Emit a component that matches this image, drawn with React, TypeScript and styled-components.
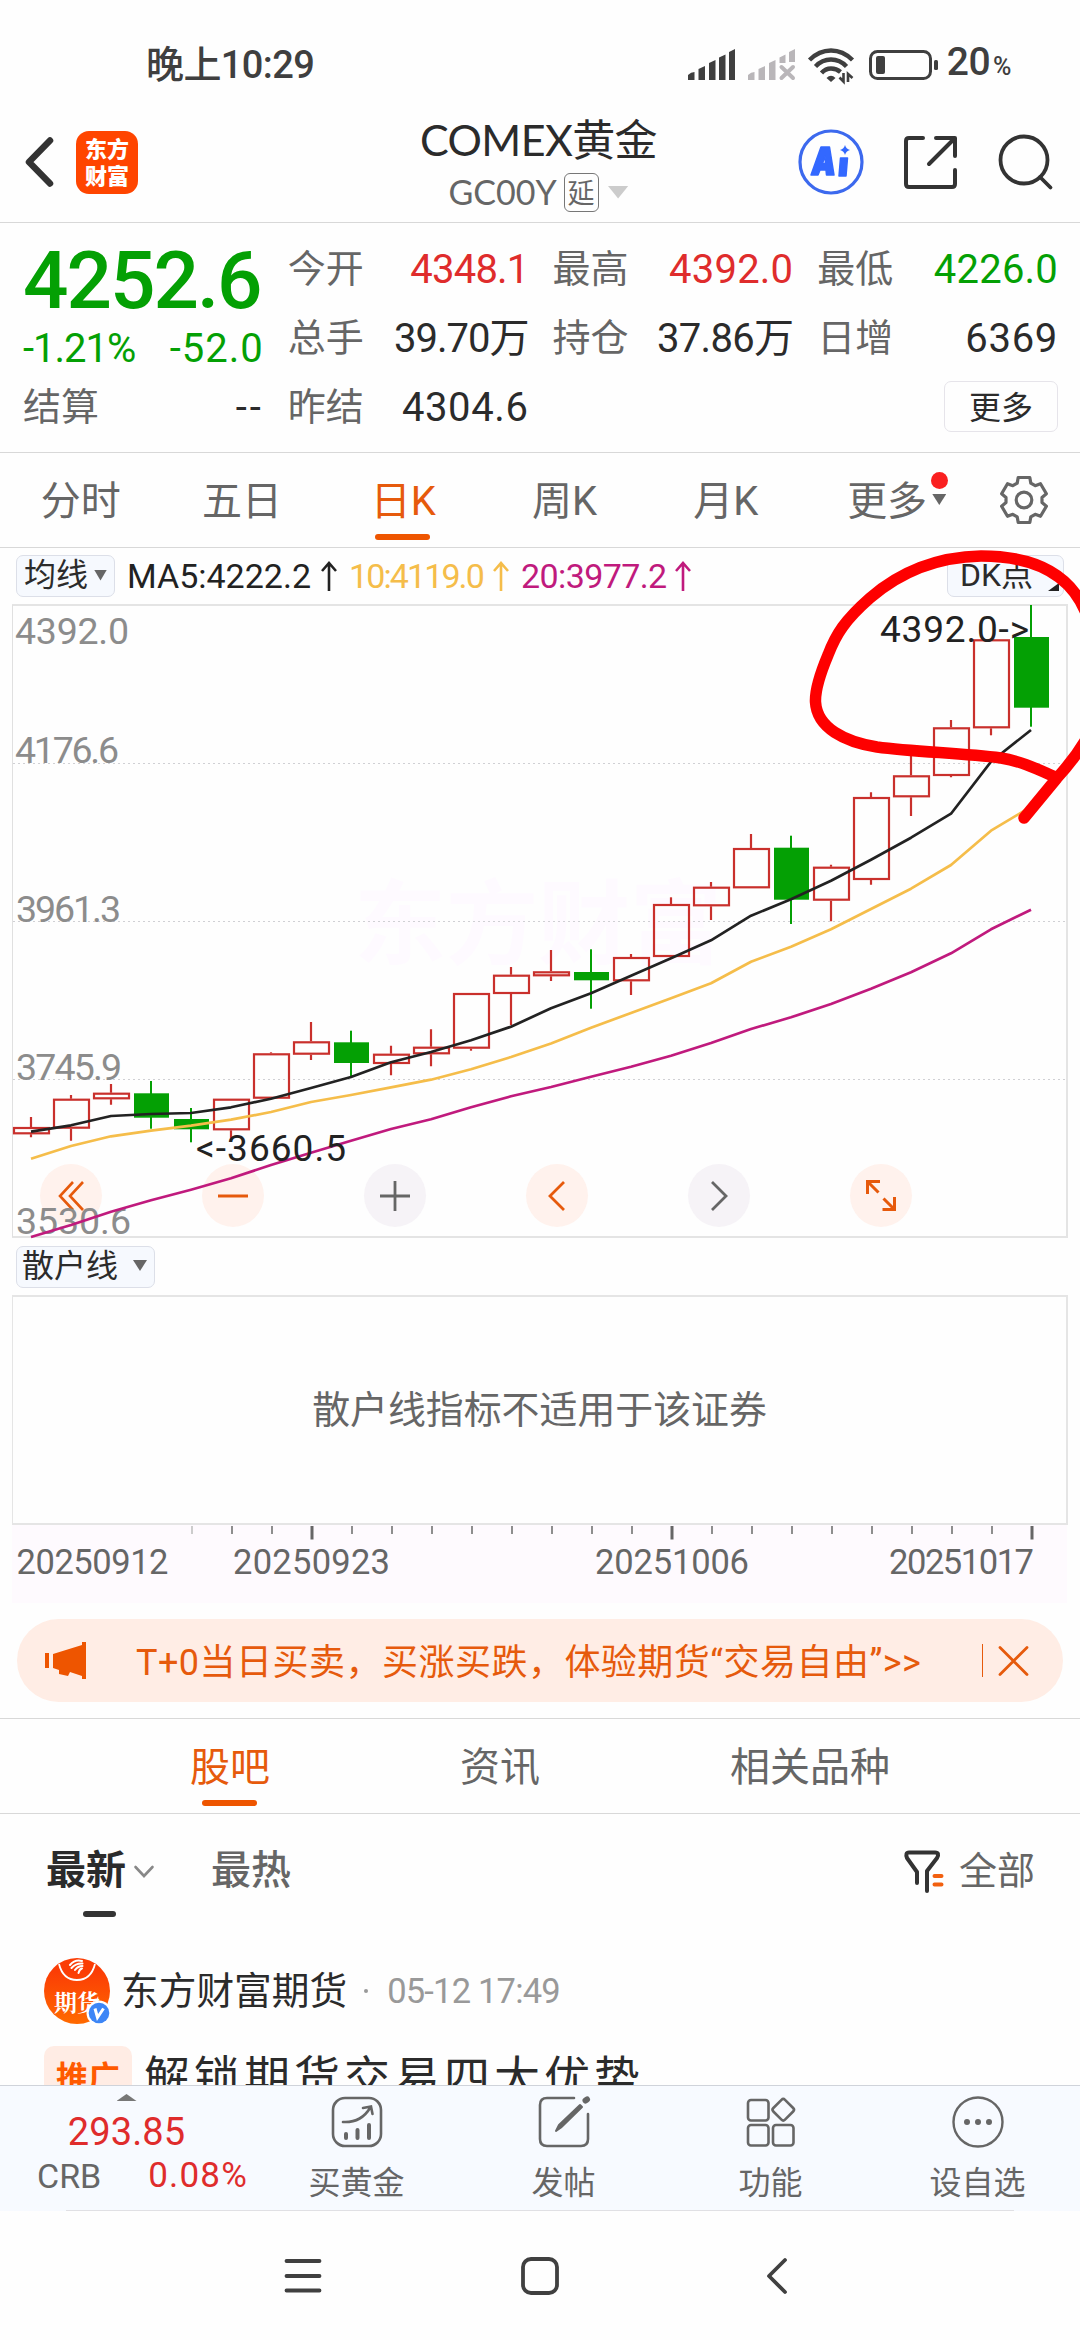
import React from "react";
import styled, { createGlobalStyle, css } from "styled-components";

const GlobalStyle = createGlobalStyle`
  * { box-sizing: border-box; }
  html, body { margin: 0; padding: 0; background: #fff; }
  body {
    width: 1080px;
    height: 2340px;
    overflow: hidden;
    font-family: Roboto, "Noto Sans CJK SC", sans-serif;
    color: #2b2b2b;
  }
  svg { display: block; flex: none; overflow: visible; }
`;

const color = {
  ink: "#2b2b2b",
  mute: "#666",
  red: "#df2c2c",
  green: "#04a004",
  orange: "#e65a0c",
  line: "#d8d8d8",
  ma10: "#f5bd4a",
  ma20: "#c01a7d",
};

const Screen = styled.div`
  position: relative;
  width: 1080px;
  height: 2340px;
  display: flex;
  flex-direction: column;
  background: #fefefe;
  overflow: hidden;
`;

/* ---------- status bar ---------- */
const StatusBar = styled.div`
  height: 112px;
  padding: 17px 69px 0 146px;
  display: flex;
  align-items: center;
  color: #3f3f3f;
  font-weight: 500;
`;
const Clock = styled.div`
  font-size: 38px;
  line-height: 48px;
  letter-spacing: -0.6px;
  margin-right: auto;
`;
const Percent = styled.div`
  display: flex;
  align-items: baseline;
  font-size: 39px;
  line-height: 48px;
  letter-spacing: -0.5px;
  small { font-size: 25px; margin-left: 3px; }
`;
const StatusIcons = styled.div`
  display: flex;
  align-items: center;
  gap: 13px;
  margin-right: 9px;
`;

/* ---------- app header ---------- */
const Header = styled.header`
  height: 111px;
  padding: 0 28px 0 25px;
  display: grid;
  grid-template-columns: 230px 1fr 230px;
  align-items: center;
  border-bottom: 1px solid ${color.line};
`;
const HeaderSide = styled.div<{ $end?: boolean }>`
  display: flex;
  align-items: center;
  gap: ${(p) => (p.$end ? "0" : "22px")};
  justify-content: ${(p) => (p.$end ? "flex-end" : "flex-start")};
  padding-bottom: 12px;
`;
const Logo = styled.div`
  width: 62px;
  height: 63px;
  padding-top: 3px;
  border-radius: 13px;
  background: #ff4500;
  color: #fff;
  font: 900 22px/27px "Noto Sans CJK SC", sans-serif;
  text-align: center;
  padding-bottom: 6px;
`;
const Titles = styled.div`
  display: flex;
  flex-direction: column;
  align-items: center;
  height: 112px;
`;
const Title = styled.h1`
  margin: 0;
  font: 400 43px/56px Lato, "Noto Sans CJK SC", sans-serif;
  letter-spacing: -0.6px;
`;
const SubTitle = styled.div`
  display: flex;
  align-items: center;
  height: 48px;
  color: ${color.mute};
  font: 400 34px/46px Lato, sans-serif;
`;
const DelayTag = styled.span`
  width: 35px;
  height: 39px;
  margin: 0 9px 0 7px;
  border: 1.5px solid #777;
  border-radius: 6px;
  font: 400 27px/36px "Noto Sans CJK SC", sans-serif;
  text-align: center;
`;
const Triangle = styled.i<{ $w: number; $h: number; $c: string; $up?: boolean }>`
  width: ${(p) => p.$w}px;
  height: ${(p) => p.$h}px;
  flex: none;
  background: ${(p) => p.$c};
  clip-path: ${(p) => (p.$up ? "polygon(0 100%, 50% 0, 100% 100%)" : "polygon(0 0, 100% 0, 50% 100%)")};
`;

/* ---------- quote ---------- */
const Quote = styled.section`
  height: 230px;
  padding: 11px 22px 0 23px;
  display: grid;
  grid-template-columns: repeat(4, 1fr);
  column-gap: 24px;
  align-items: start;
  border-bottom: 1px solid ${color.line};
`;
const QuoteColumn = styled.div`
  display: grid;
  grid-auto-rows: 69px;
`;
const QuoteCell = styled.div`
  display: flex;
  align-items: center;
  justify-content: space-between;
  white-space: nowrap;
`;
const Label = styled.span`
  font-size: 38px;
  line-height: 50px;
  color: ${color.mute};
`;
const Value = styled.span<{ $c?: string; $ls?: number }>`
  font-size: 40px;
  line-height: 50px;
  padding-top: 2px;
  letter-spacing: ${(p) => p.$ls ?? 0}px;
  color: ${(p) => p.$c ?? color.ink};
`;
const PriceColumn = styled.div`
  display: grid;
  grid-template-rows: 90px 48px 69px;
`;
const Price = styled.div`
  padding-top: 2px;
  font-size: 80px;
  font-weight: 500;
  line-height: 90px;
  letter-spacing: -2px;
  color: ${color.green};
`;
const MoreButton = styled.button`
  width: 114px;
  height: 51px;
  margin-left: auto;
  padding: 0 0 4px;
  border: 1.5px solid #e6e4ea;
  border-radius: 7px;
  background: transparent;
  color: ${color.ink};
  font: 400 32px/44px "Noto Sans CJK SC", sans-serif;
`;

/* ---------- tabs ---------- */
const PeriodTabs = styled.nav`
  height: 95px;
  display: flex;
  border-bottom: 1px solid ${color.line};
`;
const underline = css`
  &::after {
    content: "";
    position: absolute;
    left: 50%;
    bottom: 7px;
    width: 55px;
    height: 6px;
    margin-left: -28px;
    border-radius: 3px;
    background: #ee5500;
  }
`;
const Tab = styled.div<{ $active?: boolean; $w?: number }>`
  position: relative;
  width: ${(p) => (p.$w ? `${p.$w}px` : "auto")};
  display: flex;
  align-items: center;
  justify-content: center;
  padding-bottom: 4px;
  font-size: 40px;
  color: ${(p) => (p.$active ? color.orange : color.mute)};
  ${(p) => p.$active && underline}
`;
const TabCaret = styled.span`
  position: absolute;
  right: 20px;
  top: 19px;
  display: flex;
  flex-direction: column;
  align-items: center;
  gap: 5px;
`;
const Dot = styled.i`
  width: 17px;
  height: 17px;
  border-radius: 50%;
  background: #fa2020;
`;
const GearCell = styled.div`
  flex: 1;
  display: flex;
  align-items: center;
  justify-content: center;
`;

/* ---------- chart ---------- */
const IndicatorRow = styled.div<{ $h: number }>`
  height: ${(p) => p.$h}px;
  padding: 0 16px;
  display: flex;
  align-items: center;
`;
const Picker = styled.div<{ $w: number; $inset?: number }>`
  width: ${(p) => p.$w}px;
  height: 42px;
  padding: 0 7px 2px ${(p) => p.$inset ?? 7}px;
  display: flex;
  align-items: center;
  justify-content: space-between;
  border: 1px solid #dcdfe8;
  border-radius: 7px;
  background: #f6f9fe;
  font-size: 32px;
  line-height: 38px;
  white-space: nowrap;
`;
const Average = styled.div<{ $c: string; $ls: number; $w: number }>`
  width: ${(p) => p.$w}px;
  display: flex;
  align-items: center;
  justify-content: space-between;
  color: ${(p) => p.$c};
  font-size: 34px;
  line-height: 42px;
  letter-spacing: ${(p) => p.$ls}px;
  white-space: nowrap;
`;
const Averages = styled.div`
  display: flex;
  gap: 12px;
  margin: 0 auto 0 12px;
`;
const ChartBox = styled.div`
  position: relative;
  height: 634px;
`;
const ChartTools = styled.div`
  position: absolute;
  left: 40px;
  bottom: 11px;
  display: flex;
  gap: 100px;
`;
const Tool = styled.button<{ $grey?: boolean }>`
  width: 62px;
  height: 63px;
  padding: 0;
  border: 0;
  border-radius: 50%;
  display: flex;
  align-items: center;
  justify-content: center;
  background: ${(p) => (p.$grey ? "#f6f3f7" : "#fff2ed")};
  color: ${(p) => (p.$grey ? "#666" : color.orange)};
`;
const ChartSvg = styled.svg`
  position: relative;
`;
const EmptyPanel = styled.div`
  height: 230px;
  margin: 0 12px;
  padding-bottom: 8px;
  border: 2px solid #e5e5e5;
  border-left-width: 1px;
  display: flex;
  align-items: center;
  justify-content: center;
  font-size: 37.9px;
  color: ${color.mute};
`;
const MarkOverlay = styled.svg`
  position: absolute;
  left: 0;
  top: 0;
  pointer-events: none;
`;

/* ---------- banner ---------- */
const Banner = styled.div`
  height: 83px;
  margin: 16px 17px;
  padding: 0 34px 0 28px;
  display: flex;
  align-items: center;
  border-radius: 42px;
  background: #ffede5;
  color: ${color.orange};
  font-size: 36px;
  white-space: nowrap;
`;
const BannerText = styled.span`
  margin: 0 auto 0 50px;
  padding-bottom: 3px;
  letter-spacing: 0.48px;
`;
const BannerRule = styled.i`
  width: 1.5px;
  height: 33px;
  margin-right: 15px;
  background: ${color.orange};
`;

/* ---------- feed ---------- */
const FeedTabs = styled.nav`
  height: 96px;
  display: flex;
  justify-content: space-evenly;
  border-top: 1px solid ${color.line};
  border-bottom: 1px solid ${color.line};
`;
const SortRow = styled.div`
  height: 144px;
  padding: 33px 45px 0 46px;
  display: flex;
  align-items: flex-start;
  font-size: 40px;
  line-height: 48px;
`;
const Sort = styled.div<{ $active?: boolean }>`
  position: relative;
  display: flex;
  align-items: center;
  margin-right: 57px;
  gap: 8px;
  font-weight: ${(p) => (p.$active ? 700 : 500)};
  color: ${(p) => (p.$active ? color.ink : color.mute)};
  &::after {
    content: "";
    display: ${(p) => (p.$active ? "block" : "none")};
    position: absolute;
    left: 37px;
    top: 64px;
    width: 33px;
    height: 6px;
    border-radius: 3px;
    background: #333;
  }
`;
const Filter = styled.div`
  margin-left: auto;
  display: flex;
  align-items: center;
  gap: 15px;
  font-size: 38px;
  color: ${color.mute};
`;
const Post = styled.article`
  height: 127px;
  padding: 0 44px;
  overflow: hidden;
`;
const Author = styled.div`
  display: flex;
  align-items: center;
  height: 66px;
  font-size: 37.7px;
  line-height: 50px;
  white-space: nowrap;
`;
const Avatar = styled.div`
  position: relative;
  width: 66px;
  height: 66px;
  margin-right: 11px;
  border-radius: 50%;
  background: linear-gradient(#fb3d05 20%, #ff6a00);
  color: #fff;
  font: 700 23px/26px "Noto Serif CJK SC", "Noto Sans CJK SC", serif;
  padding: 31px 0 0 10px;
`;
const AvatarMark = styled.svg`
  position: absolute;
  left: 0;
  top: 0;
`;
const When = styled.span`
  color: #999;
  font-size: 34.5px;
  letter-spacing: -0.8px;
`;
const Separator = styled.i`
  width: 4px;
  height: 4px;
  margin: 0 19px 0 17px;
  border-radius: 50%;
  background: #999;
`;
const PostTitle = styled.div`
  display: flex;
  align-items: flex-start;
  margin-top: 22px;
  white-space: nowrap;
  font-size: 46px;
  font-weight: 400;
  line-height: 64px;
  letter-spacing: 4px;
`;
const Promo = styled.span`
  width: 88px;
  height: 66px;
  margin-right: 12px;
  border-radius: 10px;
  background: #ffece4;
  color: #ff5a00;
  font-size: 32px;
  font-weight: 700;
  line-height: 65px;
  letter-spacing: 0;
  text-align: center;
`;

/* ---------- bottom bars ---------- */
const BottomBar = styled.div`
  height: 126px;
  display: grid;
  grid-template-columns: 253px repeat(4, 207px);
  border-top: 1px solid #cfd3da;
  background: #f7faff;
`;
const IndexCell = styled.div`
  display: flex;
  flex-direction: column;
  align-items: center;
  padding-top: 8px;
`;
const IndexPrice = styled.div`
  margin-top: 9px;
  font-size: 38px;
  line-height: 44px;
  color: ${color.red};
  letter-spacing: 0.1px;
`;
const IndexRow = styled.div`
  width: 100%;
  padding: 0 5px 0 37px;
  display: flex;
  justify-content: space-between;
  font-size: 34px;
  line-height: 44px;
  color: ${color.mute};
  em { font-style: normal; font-size: 35px; color: ${color.red}; letter-spacing: 1.2px; }
`;
const Action = styled.div`
  display: flex;
  flex-direction: column;
  align-items: center;
  gap: 13px;
  padding-top: 10px;
  color: ${color.mute};
  font-size: 32px;
  line-height: 44px;
`;
const NavBar = styled.div`
  height: 129px;
  display: flex;
  justify-content: center;
  align-items: center;
  gap: 199px;
  position: relative;
  &::before {
    content: "";
    position: absolute;
    left: 66px;
    right: 66px;
    top: -1px;
    height: 1px;
    background: #e0e0e4;
  }
`;

/* ---------- data ---------- */
type Candle = [up: 0 | 1, high: number, top: number, bottom: number, low: number];
const candles: Candle[] = [
  [1, 1117, 1127, 1134.3, 1137.3],
  [1, 1095, 1098.7, 1128.7, 1140.7],
  [1, 1084, 1092.7, 1099.3, 1104.7],
  [0, 1081, 1093.3, 1117.7, 1128.7],
  [0, 1108, 1119, 1129.3, 1142.3],
  [1, 1098.7, 1098.7, 1130.3, 1139.7],
  [1, 1052.3, 1053.3, 1098.7, 1098.7],
  [1, 1022, 1041.3, 1054.7, 1060],
  [0, 1030.7, 1042.3, 1063, 1077],
  [1, 1045.7, 1053.7, 1064, 1075.3],
  [1, 1029.3, 1046.7, 1054.3, 1066.3],
  [1, 993, 993, 1048.7, 1050.7],
  [1, 967, 974.7, 994, 1025.3],
  [1, 950, 971.3, 976.3, 981],
  [0, 949.3, 972, 980.3, 1008.7],
  [1, 954, 957, 981.3, 995],
  [1, 897.3, 904, 957, 957],
  [1, 882, 886.7, 906.3, 920],
  [1, 834, 848, 888.3, 888.3],
  [0, 835.7, 847.7, 899.7, 924],
  [1, 864.7, 866.7, 900.7, 921.3],
  [1, 792.3, 797, 880, 884.7],
  [1, 755, 775.3, 797.3, 816],
  [1, 720, 727.3, 776, 777.3],
  [1, 639.3, 639.3, 728.3, 735.3],
  [0, 605, 637, 707.7, 726.7],
];
const averages: { stroke: string; ys: number[] }[] = [
  {
    stroke: color.ma20,
    ys: [1237, 1225, 1211.7, 1200.3, 1189.7, 1178.3, 1165, 1152.7, 1140.7, 1129, 1119.3, 1107.3, 1096.3, 1087, 1076.7, 1066.7, 1055.7, 1043, 1029, 1017.3, 1004, 988.7, 972.3, 953.3, 929.3, 909.7],
  },
  {
    stroke: color.ma10,
    ys: [1158.7, 1146, 1136.3, 1130.7, 1125.7, 1119.7, 1112, 1102, 1095, 1087.3, 1079.7, 1069.3, 1057, 1043.5, 1027.7, 1013, 998.3, 983.3, 961.7, 946.7, 929.3, 909, 888.7, 865, 830.7, 806.7],
  },
  {
    stroke: "#222",
    ys: [1131.7, 1125.3, 1116, 1114, 1113, 1107.3, 1098.7, 1088, 1077, 1062.3, 1052, 1040.3, 1026.7, 1008.3, 993.3, 975.7, 958.3, 940.3, 915.7, 899.3, 880.7, 859.7, 837.7, 813.7, 761.7, 730],
  },
];
const cx = (i: number) => 31 + i * 40;
const levels = [
  { t: "4392.0", x: 15, y: 644, w: 114 },
  { t: "4176.6", x: 15, y: 763, w: 104 },
  { t: "3961.3", x: 16, y: 922, w: 105 },
  { t: "3745.9", x: 16, y: 1080, w: 106 },
  { t: "3530.6", x: 16, y: 1234, w: 115 },
];
const dates = [
  { t: "20250912", x: 16.5, w: 152 },
  { t: "20250923", x: 233, w: 157 },
  { t: "20251006", x: 595, w: 154 },
  { t: "20251017", x: 889, w: 145 },
];

const KLine = () => (
  <ChartSvg width={1080} height={634} viewBox="0 604 1080 634">
    {[763.5, 921.5, 1079.5].map((y) => (
      <line key={y} x1={13} x2={1066} y1={y} y2={y} stroke="#d0d0d4" strokeWidth={1} strokeDasharray="2 3" />
    ))}
    <path d="M12 605H1067V1237H12" fill="none" stroke="#e4e4e4" strokeWidth={2} />
    <path d="M12.5 605V1237" stroke="#e0e0e0" strokeWidth={1} />
    {levels.map((l) => (
      <text key={l.t} x={l.x} y={l.y} textLength={l.w} fontSize={37.5} fill="#8c8c8c">{l.t}</text>
    ))}
    {candles.map(([up, high, top, bottom, low], i) =>
      up ? (
        <g key={i} stroke="#c9302c" strokeWidth={2.2} fill="none">
          <path d={`M${cx(i)} ${high}V${top}M${cx(i)} ${bottom}V${low}`} />
          <rect x={cx(i) - 17} y={top + 1} width={35} height={bottom - top - 2} />
        </g>
      ) : (
        <g key={i} fill="#04a004">
          <rect x={cx(i) - 1} y={high} width={2} height={low - high} />
          <rect x={cx(i) - 17} y={top} width={35} height={bottom - top} />
        </g>
      )
    )}
    {averages.map((a) => (
      <polyline
        key={a.stroke}
        points={a.ys.map((y, i) => `${cx(i)},${y}`).join(" ")}
        fill="none"
        stroke={a.stroke}
        strokeWidth={2.7}
        strokeLinejoin="round"
      />
    ))}
    <text x={196} y={1160.5} textLength={150} fontSize={37} fill="#222">{"<-3660.5"}</text>
    <text x={880} y={642} textLength={149} fontSize={37} fill="#222">{"4392.0->"}</text>
  </ChartSvg>
);

const WatermarkText = styled.div`
  position: absolute;
  left: 354px;
  top: 248px;
  font: 700 92px/130px "Noto Sans CJK SC", sans-serif;
  color: #fefaff;
`;

const TimeAxis = () => (
  <svg width={1080} height={78} viewBox="0 1525 1080 78">
    <rect x={12} y={1525} width={1055} height={78} fill="#fefafe" />
    {Array.from({ length: 22 }, (_, i) => {
      const x = 192 + i * 40;
      const major = x === 312 || x === 672 || x === 1032;
      return (
        <rect
          key={x}
          x={x - (major ? 1.5 : 1)}
          y={1526}
          width={major ? 3 : 2}
          height={major ? 13.5 : 8}
          fill={i === 0 ? "#ccc" : major ? "#666" : "#8e8e8e"}
        />
      );
    })}
    {dates.map((d) => (
      <text key={d.t} x={d.x} y={1574} textLength={d.w} fontSize={34.5} fill="#666">{d.t}</text>
    ))}
  </svg>
);

const UpArrow = () => (
  <svg width={16} height={30} viewBox="0 0 16 30" fill="none" stroke="currentColor" strokeWidth={2.6}>
    <path d="M8 30V2M1 10L8 2L15 10" />
  </svg>
);

const gearPoints = Array.from({ length: 6 }, (_, k) => {
  const a = -90 + k * 60;
  return ([[-22, 18.2], [-14.5, 23.2], [14.5, 23.2], [22, 18.2]] as const)
    .map(([d, r]) => {
      const t = ((a + d) * Math.PI) / 180;
      return `${(r * Math.cos(t)).toFixed(1)},${(r * Math.sin(t)).toFixed(1)}`;
    })
    .join(" ");
}).join(" ");

const Signal = ({ off }: { off?: boolean }) => (
  <svg width={47} height={31} viewBox="0 0 47 31" fill={off ? "#b9b6b9" : "#3f3f3f"}>
    <path d="M0 31V26Q3 23 6.5 23V31Z" />
    <path d="M10.5 31V20L17 17V31Z" />
    <path d="M21 31V14L27.5 11V31Z" />
    {off ? (
      <>
        <path d="M31.5 14V8.5L37.5 5.5V14ZM41 13V3L47 0V13Z" />
        <path d="M33.5 18L45 29M45 18L33.5 29" stroke="#b9b6b9" strokeWidth={4} strokeLinecap="round" />
      </>
    ) : (
      <path d="M31 31V8.5L37.5 5.5V31ZM41 31V3L47 0V31Z" />
    )}
  </svg>
);

const BatteryIcon = styled.svg`
  margin-left: 2px;
`;

const StatusGlyphs = () => (
  <StatusIcons>
    <Signal />
    <Signal off />
    <svg width={46} height={34} viewBox="0 0 46 34" fill="none" stroke="#3f3f3f" strokeWidth={4.4}>
      <path d="M1.5 12Q11 2.5 23 2.5T44.5 12M7.5 18.5Q14 11.5 23 11.5T38.5 18.5M13.5 25Q17.5 20.5 23 20.5T32.5 24" />
      <path d="M18.5 30Q23 25.5 27.5 30L23 34Z" fill="#3f3f3f" stroke="none" />
      <path d="M35.5 25V33.5L31.5 29.5M40 34V26L44.5 30" strokeWidth={2.6} />
    </svg>
    <BatteryIcon width={69} height={30} viewBox="0 0 69 30">
      <rect x={1.5} y={1.5} width={60} height={27} rx={7} fill="none" stroke="#3f3f3f" strokeWidth={3} />
      <rect x={7} y={6} width={9} height={18} rx={2} fill="#3f3f3f" />
      <rect x={65} y={10} width={4} height={10} rx={1.5} fill="#3f3f3f" />
    </BatteryIcon>
  </StatusIcons>
);

const ShareIcon = styled.svg`
  margin: 0 41px 0 40px;
`;

const quoteColumns: { label: string; value: string; c?: string; ls?: number }[][] = [
  [
    { label: "今开", value: "4348.1", c: color.red, ls: -0.8 },
    { label: "总手", value: "39.70万", ls: -1 },
    { label: "昨结", value: "4304.6", ls: 0.6 },
  ],
  [
    { label: "最高", value: "4392.0", c: color.red, ls: 0.2 },
    { label: "持仓", value: "37.86万", ls: -0.7 },
  ],
  [
    { label: "最低", value: "4226.0", c: color.green, ls: 0.2 },
    { label: "日增", value: "6369", ls: 0.7 },
  ],
];

export default function App() {
  return (
    <Screen>
      <GlobalStyle />
      <StatusBar>
        <Clock>晚上10:29</Clock>
        <StatusGlyphs />
        <Percent>20<small>%</small></Percent>
      </StatusBar>

      <Header>
        <HeaderSide>
          <svg width={29} height={50} viewBox="0 0 29 50" fill="none" stroke="#333" strokeWidth={6.5} strokeLinecap="round">
            <path d="M25 3.5L4 25L25 46.5" strokeLinejoin="round" />
          </svg>
          <Logo>东方<br />财富</Logo>
        </HeaderSide>
        <Titles>
          <Title>COMEX黄金</Title>
          <SubTitle>
            GC00Y
            <DelayTag>延</DelayTag>
            <Triangle $w={21} $h={13} $c="#ccc" />
          </SubTitle>
        </Titles>
        <HeaderSide $end>
          <svg width={66} height={66} viewBox="0 0 66 66" fill="none">
            <circle cx={33} cy={33} r={31} stroke="#3c69ee" strokeWidth={3.2} />
            <path d="M13 46L23 18H31.5L36 46H28.5L28 41H22L20 46ZM24.5 34.5H27.5L27 27Z" fill="#3368ff" stroke="#3368ff" strokeWidth={1.5} strokeLinejoin="round" fillRule="evenodd" />
            <path d="M42.5 29H49.5L48 47H41Z" fill="#3368ff" stroke="#3368ff" strokeWidth={1.5} strokeLinejoin="round" />
            <path d="M47 16Q48 20 52 21Q48 22 47 26Q46 22 42 21Q46 20 47 16Z" fill="#3368ff" />
          </svg>
          <ShareIcon width={53} height={53} viewBox="0 0 53 53" fill="none" stroke="#333" strokeWidth={4} strokeLinecap="round" strokeLinejoin="round">
            <path d="M19 2H5Q2 2 2 5V48Q2 51 5 51H48Q51 51 51 48V34M32 2H51V20M50 3L25 28" />
          </ShareIcon>
          <svg width={54} height={54} viewBox="0 0 54 54" fill="none" stroke="#333" strokeWidth={3.8} strokeLinecap="round">
            <circle cx={26} cy={25} r={23.5} />
            <path d="M42 42L52.5 52.5" />
          </svg>
        </HeaderSide>
      </Header>

      <Quote>
        <PriceColumn>
          <Price>4252.6</Price>
          <QuoteCell>
            <Value $c={color.green} $ls={-1}>-1.21%</Value>
            <Value $c={color.green} $ls={1}>-52.0</Value>
          </QuoteCell>
          <QuoteCell>
            <Label>结算</Label>
            <Value $ls={3}>--</Value>
          </QuoteCell>
        </PriceColumn>
        {quoteColumns.map((col, c) => (
          <QuoteColumn key={c}>
            {col.map((q) => (
              <QuoteCell key={q.label}>
                <Label>{q.label}</Label>
                <Value $c={q.c} $ls={q.ls}>{q.value}</Value>
              </QuoteCell>
            ))}
            {c === 2 && (
              <QuoteCell>
                <MoreButton>更多</MoreButton>
              </QuoteCell>
            )}
          </QuoteColumn>
        ))}
      </Quote>

      <PeriodTabs>
        {["分时", "五日", "日K", "周K", "月K", "更多"].map((t) => (
          <Tab key={t} $w={161.3} $active={t === "日K"}>
            {t}
            {t === "更多" && (
              <TabCaret>
                <Dot />
                <Triangle $w={14} $h={11} $c="#666" />
              </TabCaret>
            )}
          </Tab>
        ))}
        <GearCell>
          <svg width={48} height={48} viewBox="-24 -24 48 48" fill="none" stroke="#666" strokeWidth={3.2} strokeLinejoin="round">
            <polygon points={gearPoints} />
            <circle r={7.8} />
          </svg>
        </GearCell>
      </PeriodTabs>

      <IndicatorRow $h={56}>
        <Picker $w={99}>
          均线
          <Triangle $w={13} $h={11} $c="#666" />
        </Picker>
        <Averages>
          <Average $c="#222" $ls={0} $w={210}>MA5:4222.2<UpArrow /></Average>
          <Average $c={color.ma10} $ls={-1.9} $w={160}>10:4119.0<UpArrow /></Average>
          <Average $c={color.ma20} $ls={-0.6} $w={170}>20:3977.2<UpArrow /></Average>
        </Averages>
        <Picker $w={117} $inset={12}>DK点</Picker>
      </IndicatorRow>

      <ChartBox>
        <WatermarkText>东方财富</WatermarkText>
        <ChartTools>
          <Tool>
            <svg width={26} height={30} viewBox="0 0 26 30" fill="none" stroke="currentColor" strokeWidth={2.6}>
              <path d="M15 1L2 15L15 29M25 1L12 15L25 29" />
            </svg>
          </Tool>
          <Tool>
            <svg width={30} height={30} viewBox="0 0 30 30" stroke="currentColor" strokeWidth={3}>
              <path d="M0 15H30" />
            </svg>
          </Tool>
          <Tool $grey>
            <svg width={30} height={30} viewBox="0 0 30 30" stroke="currentColor" strokeWidth={2.8}>
              <path d="M0 15H30M15 0V30" />
            </svg>
          </Tool>
          <Tool>
            <svg width={18} height={30} viewBox="0 0 18 30" fill="none" stroke="currentColor" strokeWidth={2.8}>
              <path d="M16 1L2 15L16 29" />
            </svg>
          </Tool>
          <Tool $grey>
            <svg width={18} height={30} viewBox="0 0 18 30" fill="none" stroke="currentColor" strokeWidth={2.8}>
              <path d="M2 1L16 15L2 29" />
            </svg>
          </Tool>
          <Tool>
            <svg width={30} height={31} viewBox="0 0 30 31" fill="none" stroke="currentColor" strokeWidth={3}>
              <path d="M1.5 14V1.5H14M2 2L12.5 12.5M28.5 17V29.5H16.5M28 29L17.5 18.5" />
            </svg>
          </Tool>
        </ChartTools>
        <KLine />
      </ChartBox>

      <IndicatorRow $h={57}>
        <Picker $w={139} $inset={5}>
          散户线
          <Triangle $w={14} $h={11} $c="#666" />
        </Picker>
      </IndicatorRow>
      <EmptyPanel>散户线指标不适用于该证券</EmptyPanel>
      <TimeAxis />

      <Banner>
        <svg width={41} height={37} viewBox="0 0 41 37" fill="#ee5500">
          <path d="M0 11H4V26H0ZM8 12L37 3V0H41V37H37V34L25 30L23 34L14 32V28L8 26Z" />
        </svg>
        <BannerText>T+0当日买卖，买涨买跌，体验期货“交易自由”&gt;&gt;</BannerText>
        <BannerRule />
        <svg width={31} height={30} viewBox="0 0 31 30" stroke="currentColor" strokeWidth={2.8} strokeLinecap="round">
          <path d="M2 1.5L29 28.5M29 1.5L2 28.5" />
        </svg>
      </Banner>

      <FeedTabs>
        <Tab $active>股吧</Tab>
        <Tab>资讯</Tab>
        <Tab>相关品种</Tab>
      </FeedTabs>

      <SortRow>
        <Sort $active>
          最新
          <svg width={20} height={13} viewBox="0 0 20 13" fill="none" stroke="#888" strokeWidth={2.6} strokeLinecap="round">
            <path d="M1.5 2L10 11L18.5 2" />
          </svg>
        </Sort>
        <Sort>最热</Sort>
        <Filter>
          <svg width={40} height={43} viewBox="0 0 40 43" fill="none" stroke="#333" strokeWidth={4} strokeLinecap="round" strokeLinejoin="round">
            <path d="M13 33V22L3 8Q1 2.5 5 2.5H31Q36 2.5 33 8L23 21V41" />
            <path d="M30.5 26H37.5M30.5 34.5H37.5" stroke="#f2600f" />
          </svg>
          全部
        </Filter>
      </SortRow>

      <Post>
        <Author>
          <Avatar>
            期货
            <AvatarMark width={66} height={66} viewBox="0 0 66 66" fill="none">
              <path d="M15 6Q19 22 33 22T51 6" stroke="#fff" strokeWidth={1.8} />
              <path d="M26 7Q31 1 38 3M27.500 10Q32 5 38.500 5.500M31 12Q34 8 38.500 8M34.500 15Q35.500 11 38 10.500" stroke="#fff" strokeWidth={2} strokeLinecap="round" />
              <circle cx={55} cy={55} r={12.5} fill="#fff" />
              <circle cx={55} cy={55} r={10.3} fill="#3d86f6" />
              <path d="M51 50.5L53.5 59.5L59.5 50.5" stroke="#fff" strokeWidth={3} />
            </AvatarMark>
          </Avatar>
          东方财富期货
          <Separator />
          <When>05-12 17:49</When>
        </Author>
        <PostTitle>
          <Promo>推广</Promo>
          解锁期货交易四大优势
        </PostTitle>
      </Post>

      <BottomBar>
        <IndexCell>
          <Triangle $w={20} $h={7} $c="#777" $up />
          <IndexPrice>293.85</IndexPrice>
          <IndexRow>CRB<em>0.08%</em></IndexRow>
        </IndexCell>
        <Action>
          <svg width={52} height={52} viewBox="0 0 52 52" fill="none" stroke="#666" strokeWidth={2.6} strokeLinecap="round">
            <rect x={2} y={2} width={48} height={48} rx={12} />
            <path d="M12 26Q30 27 39 12M32 12L40 10.5L41.5 18" />
            <path d="M15 38V42M26.5 34V42M38 29V42" strokeWidth={4} />
          </svg>
          买黄金
        </Action>
        <Action>
          <svg width={50} height={52} viewBox="1 0 50 52" fill="none" stroke="#666" strokeWidth={2.6} strokeLinecap="round">
            <path d="M36 2H9Q2 2 2 9V43Q2 50 9 50H43Q50 50 50 43V18" />
            <path d="M42 9L44 11L23 31.5L18 35L21 29Z" fill="#666" strokeWidth={2} strokeLinejoin="round" />
            <path d="M47.5 4.5L49 3.5" strokeWidth={6} />
          </svg>
          发帖
        </Action>
        <Action>
          <svg width={52} height={52} viewBox="0 0 52 52" fill="none" stroke="#666" strokeWidth={2.6}>
            <rect x={3} y={4} width={20.5} height={20.5} rx={3} />
            <rect x={3} y={29} width={20.5} height={20.5} rx={3} />
            <rect x={28} y={29} width={20.5} height={20.5} rx={3} />
            <rect x={30} y={5.5} width={16.5} height={16.5} rx={2.5} transform="rotate(45 38.250 13.750)" />
          </svg>
          功能
        </Action>
        <Action>
          <svg width={52} height={52} viewBox="0 0 52 52" fill="#666">
            <circle cx={26} cy={26} r={24.5} fill="none" stroke="#666" strokeWidth={2.4} />
            <circle cx={15} cy={26} r={3} />
            <circle cx={26} cy={26} r={3} />
            <circle cx={37} cy={26} r={3} />
          </svg>
          设自选
        </Action>
      </BottomBar>

      <NavBar>
        <svg width={38} height={36} viewBox="0 0 38 36" stroke="#404040" strokeWidth={3.8} strokeLinecap="round">
          <path d="M2.5 3H35.5M2.5 18H35.5M2.5 32.5H35.5" />
        </svg>
        <svg width={38} height={38} viewBox="0 0 38 38" fill="none" stroke="#404040" strokeWidth={3.8}>
          <rect x={2} y={2} width={34} height={34} rx={8} />
        </svg>
        <svg width={38} height={36} viewBox="0 0 38 36" fill="none" stroke="#404040" strokeWidth={3.8} strokeLinecap="round" strokeLinejoin="round">
          <path d="M27 2L11 18L27 34" />
        </svg>
      </NavBar>

      <MarkOverlay width={1080} height={860} viewBox="0 0 1080 860" fill="none">
        <path d="M1048 591L1059 583V591Z" fill="#222" />
        <path
          d="M1086 613C1072 578 1040 556 981 556C935 557 900 572 870 598C845 620 836 634 828 655C820 674 815 690 815.5 702C817 728 845 742 877 747C915 752 960 753 1001 758C1020 761 1035 768 1053 776M1085 741C1076 756 1067 767 1057 778L1024 818"
          stroke="#fe0000"
          strokeWidth={11.5}
          strokeLinecap="round"
          strokeLinejoin="round"
        />
      </MarkOverlay>
    </Screen>
  );
}
